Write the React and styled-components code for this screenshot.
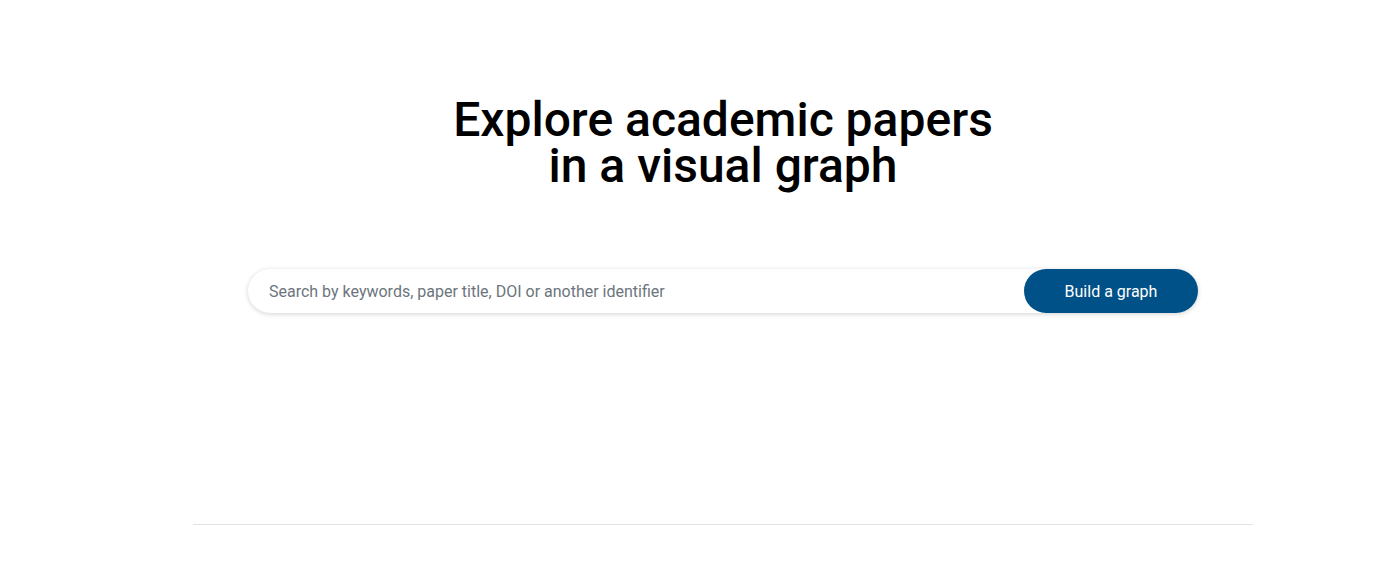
import React from "react";
import styled, { createGlobalStyle } from "styled-components";

const GlobalStyle = createGlobalStyle`
  html, body {
    margin: 0;
    padding: 0;
    background: #ffffff;
    font-family: Roboto, "Liberation Sans", Arial, sans-serif;
    color: #000;
  }
`;

const Page = styled.div`
  min-height: 563px;
  padding-left: 193px;
  box-sizing: border-box;
`;

const Container = styled.main`
  width: 1060px;
  display: flex;
  flex-direction: column;
  align-items: center;
`;

const Title = styled.h1`
  margin: 97px 0 0;
  font-family: Roboto, "Liberation Sans", Arial, sans-serif;
  font-weight: 500;
  font-size: 48px;
  line-height: 46px;
  text-align: center;
  letter-spacing: 0;
`;

const SearchForm = styled.form`
  margin-top: 80px;
  width: 950px;
  height: 44px;
  display: flex;
  align-items: stretch;
  border-radius: 22px;
  background: #fff;
  box-shadow: 0 1px 5px rgba(0, 0, 0, 0.18);
`;

const SearchInput = styled.input`
  flex: 1;
  min-width: 0;
  border: none;
  outline: none;
  background: transparent;
  padding: 0 0 0 21px;
  font-family: Roboto, "Liberation Sans", Arial, sans-serif;
  font-size: 16px;
  color: #212529;
  caret-color: #000;
  border-radius: 22px 0 0 22px;

  &::placeholder {
    color: #6c757d;
  }
`;

const BuildButton = styled.button`
  width: 174px;
  border: none;
  border-radius: 22px;
  background: #005187;
  color: #fff;
  font-family: Roboto, "Liberation Sans", Arial, sans-serif;
  font-size: 16px;
  font-weight: 400;
  cursor: pointer;
`;

const Divider = styled.hr`
  width: 100%;
  margin: 211px 0 0;
  border: none;
  border-top: 1px solid #e2e2e2;
`;

export default function App() {
  return (
    <>
      <GlobalStyle />
      <Page>
        <Container>
          <Title>
            Explore academic papers
            <br />
            in a visual graph
          </Title>
          <SearchForm onSubmit={(e) => e.preventDefault()}>
            <SearchInput
              autoFocus
              type="text"
              placeholder="Search by keywords, paper title, DOI or another identifier"
            />
            <BuildButton type="submit">Build a graph</BuildButton>
          </SearchForm>
          <Divider />
        </Container>
      </Page>
    </>
  );
}
